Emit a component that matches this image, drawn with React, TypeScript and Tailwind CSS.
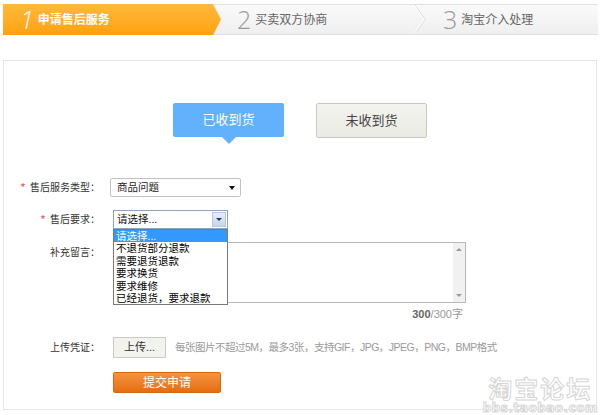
import React from "react";

function Tri({ cls }: { cls: string }) {
  return <span className={"inline-block w-0 h-0 border-x-[3px] border-x-transparent " + cls} />;
}

export default function App() {
  const items = ["请选择...", "不退货部分退款", "需要退货退款", "要求换货", "要求维修", "已经退货，要求退款"];
  return (
    <div className="relative w-[600px] h-[415px] overflow-hidden bg-white text-[#333] font-['Liberation_Sans','Noto_Sans_CJK_SC',sans-serif]">
      {/* step bar */}
      <div className="mt-[4px] ml-[3px] mr-[2px] h-[31px] flex bg-gradient-to-b from-[#fafafa] to-[#efefef] border-y border-[#e0e0e0]">
        <div className="-my-px h-[31px] w-[218px] shrink-0 flex items-center pl-[17px] bg-gradient-to-b from-[#ffb93a] to-[#ffa208] [clip-path:polygon(0_0,210px_0,100%_50%,210px_100%,0_100%)]">
          <span className="text-[25px] leading-none font-light italic text-white font-['Open_Sans']">1</span>
          <span className="ml-[4px] text-[12px] font-bold text-white">申请售后服务</span>
        </div>
        <div className="w-[192px] shrink-0 flex items-center pl-[16px]">
          <span className="text-[25px] leading-none font-light text-[#9a9a9a] font-['Open_Sans']">2</span>
          <span className="ml-[4px] text-[12px] text-[#666]">买卖双方协商</span>
        </div>
        <svg width="14" height="29" viewBox="0 0 14 29" className="shrink-0">
          <polyline points="2,0 12,14.5 2,29" fill="none" stroke="#dadada" strokeWidth="1" />
          <polyline points="1,0 11,14.5 1,29" fill="none" stroke="#ffffff" strokeWidth="1" />
        </svg>
        <div className="flex items-center pl-[16px]">
          <span className="text-[25px] leading-none font-light text-[#9a9a9a] font-['Open_Sans']">3</span>
          <span className="ml-[4px] text-[12px] text-[#666]">淘宝介入处理</span>
        </div>
      </div>

      {/* panel */}
      <div className="relative mt-[25px] mx-[3px] border border-[#e6e6e6] pt-[42px] pb-[16px]">
        <div className="flex justify-center items-start gap-[32px]">
          <div className="relative w-[111px] h-[34px] bg-[#62b1fd] rounded-[2px] flex items-center justify-center text-white text-[13px]">
            已收到货
            <span className="absolute left-1/2 -translate-x-1/2 top-full w-0 h-0 border-x-[7px] border-x-transparent border-t-[7px] border-t-[#62b1fd]" />
          </div>
          <div className="w-[111px] h-[35px] border border-[#c9c9c4] bg-gradient-to-b from-[#f3f3ef] to-[#ebebe5] rounded-[2px] flex items-center justify-center text-[#444] text-[13px]">
            未收到货
          </div>
        </div>

        {/* row 1 */}
        <div className="mt-[40px] flex items-center h-[19px]">
          <div className="w-[96px] text-right text-[10px] text-[#333]">
            <span className="text-[#e4393c] text-[11px] mr-[5px]">*</span>售后服务类型：
          </div>
          <div className="ml-[10px] w-[131px] h-[19px] border border-[#c2c2c2] rounded-[2px] flex items-center justify-between pl-[6px] pr-[5px] text-[10.5px] text-[#222]">
            商品问题
            <Tri cls="border-t-[4px] border-t-[#111]" />
          </div>
        </div>

        {/* row 2 */}
        <div className="mt-[13px] flex items-center h-[19px]">
          <div className="w-[96px] text-right text-[10px] text-[#333]">
            <span className="text-[#e4393c] text-[11px] mr-[5px]">*</span>售后要求：
          </div>
          <div className="relative ml-[13px] w-[115px] h-[19px] border border-[#8ea4bf] flex bg-white">
            <div className="flex-1 flex items-center pl-[3px] text-[10.5px] text-[#111]">请选择...</div>
            <div className="w-[14px] m-px border border-[#b6c7de] bg-gradient-to-b from-[#e6eef9] to-[#c3d5ee] flex items-center justify-center">
              <Tri cls="border-t-[3px] border-t-[#2b3b55]" />
            </div>
            <div className="absolute left-[-1px] top-[18px] z-10 w-[115px] border border-[#7a7a7a] bg-white text-[10.5px] leading-[12.4px] text-black">
              {items.map((t, i) => (
                <div key={t} className={i === 0 ? "pl-[2px] bg-[#3399ff] text-white" : "pl-[2px]"}>{t}</div>
              ))}
            </div>
          </div>
        </div>

        {/* row 3 */}
        <div className="mt-[13px] flex items-start">
          <div className="w-[96px] pt-[3px] text-right text-[10px] text-[#333]">补充留言：</div>
          <div className="ml-[13px] w-[353px] h-[61px] border border-[#b8b8b8] flex">
            <div className="flex-1 bg-white" />
            <div className="w-[12px] bg-[#f1f1f1] flex flex-col justify-between items-center py-[5px]">
              <Tri cls="border-b-[3px] border-b-[#9a9a9a]" />
              <Tri cls="border-t-[3px] border-t-[#9a9a9a]" />
            </div>
          </div>
        </div>
        <div className="ml-[109px] w-[350px] mt-[4px] text-right text-[11px] leading-[14px]">
          <b className="text-[#666]">300</b>
          <span className="text-[#999]">/300字</span>
        </div>

        {/* row 4 */}
        <div className="mt-[16px] flex items-center">
          <div className="w-[96px] text-right text-[10px] text-[#333]">上传凭证：</div>
          <div className="ml-[13px] w-[53px] h-[21px] border border-[#cacaca] bg-[#f3f3ee] flex items-center justify-center text-[11px] text-[#333]">
            上传...
          </div>
          <div className="ml-[9px] text-[10.5px] tracking-[-0.5px] text-[#9a9a9a]">每张图片不超过5M，最多3张，支持GIF，JPG，JPEG，PNG，BMP格式</div>
        </div>

        <div className="ml-[109px] mt-[14px] w-[108px] h-[21px] rounded-[2px] border border-[#d8680d] bg-gradient-to-b from-[#f7933d] to-[#e46e0e] flex items-center justify-center text-white text-[12px]">
          提交申请
        </div>
      </div>

      {/* watermark */}
      <div className="absolute right-[2px] bottom-[1px] flex flex-col items-center text-white font-bold [-webkit-text-stroke:1px_#d6d6d6] font-['Noto_Sans_CJK_SC',sans-serif]">
        <div className="text-[24px] leading-[24px] tracking-[2px]">淘宝论坛</div>
        <div className="mt-[2px] text-[12px] leading-[12px] tracking-[0.5px] font-['DejaVu_Sans',sans-serif]">bbs.taobao.com</div>
      </div>
    </div>
  );
}
